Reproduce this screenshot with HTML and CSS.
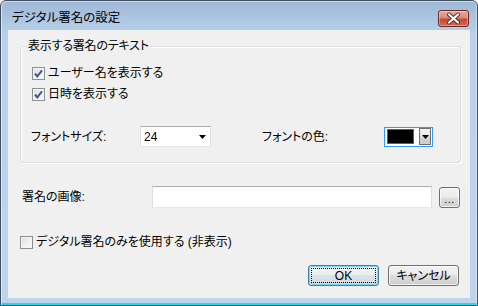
FILE: index.html
```html
<!DOCTYPE html>
<html lang="ja">
<head>
<meta charset="utf-8">
<title>デジタル署名の設定</title>
<link rel="stylesheet" href="styles.css">
</head>
<body>
<div class="window">
  <div class="titlebar">
    <span class="title">デジタル署名の設定</span>
    <span class="close">
      <svg width="29" height="15" viewBox="0 0 29 15">
        <path d="M10 3.5 L19 11.5 M19 3.5 L10 11.5" stroke="#5a2a24" stroke-width="4" stroke-linecap="round"/>
        <path d="M10 3.5 L19 11.5 M19 3.5 L10 11.5" stroke="#ffffff" stroke-width="2.2" stroke-linecap="round"/>
      </svg>
    </span>
  </div>
  <div class="client">
    <div class="group">
      <div class="legend">表示する署名のテキスト</div>
      <div class="check row1"><span class="box"><svg width="11" height="11" viewBox="0 0 11 11"><polyline points="2,5.5 4.3,8.3 9,2.3" fill="none" stroke="#3e5894" stroke-width="2"/></svg></span><span class="ctext">ユーザー名を表示する</span></div>
      <div class="check row2"><span class="box"><svg width="11" height="11" viewBox="0 0 11 11"><polyline points="2,5.5 4.3,8.3 9,2.3" fill="none" stroke="#3e5894" stroke-width="2"/></svg></span><span class="ctext">日時を表示する</span></div>
      <div class="font-row">
        <span class="lbl size-lbl">フォントサイズ:</span>
        <span class="combo"><span class="val">24</span><svg class="arrow" width="7" height="4" viewBox="0 0 7 4"><polygon points="0,0 7,0 3.5,4" fill="#000"/></svg></span>
        <span class="lbl color-lbl">フォントの色:</span>
        <span class="color-combo"><span class="swatch"></span><span class="drop"><svg width="7" height="4" viewBox="0 0 7 4"><polygon points="0,0 7,0 3.5,4" fill="#000"/></svg></span></span>
      </div>
    </div>
    <div class="image-row">
      <span class="lbl img-lbl">署名の画像:</span>
      <span class="textbox"></span>
      <span class="browse">...</span>
    </div>
    <div class="check row3"><span class="box empty"></span><span class="ctext">デジタル署名のみを使用する (非表示)</span></div>
    <div class="buttons">
      <span class="btn default"><span class="focus">OK</span></span>
      <span class="btn">キャンセル</span>
    </div>
  </div>
</div>
</body>
</html>
```

FILE: styles.css
```css
html, body {
  margin: 0;
  padding: 0;
  background: #ffffff;
}

body {
  font-family: "Liberation Sans", "Noto Sans CJK JP", sans-serif;
  font-size: 12px;
  font-feature-settings: "palt";
  color: #000;
}

.window {
  width: 478px;
  height: 306px;
  box-sizing: border-box;
  border: 1px solid #3f4e60;
  border-radius: 6px 6px 0 0;
  background: linear-gradient(180deg, #9db7d5 0px, #aec8e3 20px, #b9d1ea 34px, #bcd4ec 100%);
  box-shadow: inset 1px 1px 0 rgba(255,255,255,0.55), inset -1px 0 0 rgba(255,255,255,0.4), inset 0 -2px 0 #29d6f2;
  display: flex;
  flex-direction: column;
  overflow: hidden;
}

.titlebar {
  height: 29px;
  flex: none;
  display: flex;
  justify-content: space-between;
  align-items: flex-start;
  padding: 0 8px 0 11px;
}

.title {
  margin-top: 10px;
  line-height: 15px;
  font-size: 12.5px;
  color: #000;
}

.close {
  margin-top: 9px;
  width: 29px;
  height: 15px;
  border: 1px solid #6a2a22;
  border-radius: 3px;
  background: linear-gradient(180deg, #e9aa9c 0%, #d98a7a 45%, #c54a34 55%, #cf6a53 100%);
  box-shadow: inset 0 0 0 1px rgba(255,220,210,0.45);
  display: flex;
}

.client {
  margin: 0 7px;
  height: 268px;
  flex: none;
  background: #f0f0f0;
  display: flex;
  flex-direction: column;
}

.group {
  margin: 16px 9px 0 12px;
  height: 115px;
  border: 1px solid #d5dfe5;
  border-radius: 3px;
  box-shadow: inset 1px 1px 0 #ffffff, 1px 1px 0 #ffffff;
  display: flex;
  flex-direction: column;
}

.legend {
  margin: -8px 0 0 5px;
  padding: 0 2px;
  line-height: 14px;
  height: 14px;
  background: #f0f0f0;
  align-self: flex-start;
  letter-spacing: -0.2px;
}

.check {
  display: flex;
  align-items: center;
  height: 13px;
}

.box {
  width: 11px;
  height: 11px;
  border: 1px solid #8e8f8f;
  background: linear-gradient(135deg, #dcdcdc 0%, #f4f4f4 70%, #ffffff 100%);
  box-shadow: inset 0 0 0 1px #f4f4f4;
  flex: none;
  display: flex;
}

.ctext {
  margin-left: 3px;
  line-height: 13px;
}

.row1 {
  margin: 14px 0 0 11px;
}

.row2 {
  margin: 8px 0 0 11px;
}

.font-row {
  margin-top: 25px;
  display: flex;
  align-items: center;
  height: 21px;
  padding-left: 10px;
}

.lbl {
  line-height: 14px;
}

.size-lbl {
  width: 109px;
}

.combo {
  background: #ffffff;
  border: 1px solid #dbdfe6;
  border-top-color: #abadb3;
  border-bottom-color: #e3e9ef;
  display: flex;
  align-items: center;
  justify-content: space-between;
  padding: 0 4px 0 3px;
  box-sizing: border-box;
  width: 71px;
  height: 21px;
}

.val {
  line-height: 14px;
}

.color-lbl {
  margin-left: 51px;
  width: 122px;
}

.color-combo {
  width: 49px;
  height: 20px;
  box-sizing: border-box;
  border: 1px solid #3399ff;
  background: #ffffff;
  display: flex;
  align-items: center;
  padding: 0 1px 0 2px;
  gap: 5px;
}

.swatch {
  width: 28px;
  height: 15px;
  box-sizing: border-box;
  background: #000;
  border: 1px solid #606060;
}

.drop {
  width: 12px;
  height: 17px;
  box-sizing: border-box;
  border: 1px solid #707070;
  background: linear-gradient(180deg, #f2f2f2 0%, #e8e8e8 50%, #d6d6d6 50%, #cbcbcb 100%);
  display: flex;
  align-items: center;
  justify-content: center;
}

.image-row {
  margin-top: 23px;
  height: 22px;
  display: flex;
  align-items: center;
  padding-left: 14px;
}

.img-lbl {
  width: 130px;
}

.textbox {
  width: 280px;
  height: 22px;
  box-sizing: border-box;
  background: #ffffff;
  border: 1px solid #dbdfe6;
  border-top-color: #abadb3;
  border-bottom-color: #e3e9ef;
}

.browse {
  margin-left: 7px;
  width: 21px;
  height: 21px;
  box-sizing: border-box;
  border: 1px solid #707070;
  border-radius: 3px;
  background: linear-gradient(180deg, #f2f2f2 0%, #ebebeb 50%, #dddddd 50%, #cfcfcf 100%);
  box-shadow: inset 0 0 0 1px rgba(255,255,255,0.7);
  font-size: 11px;
  line-height: 23px;
  text-align: center;
  letter-spacing: 0.5px;
}

.row3 {
  margin: 28px 0 0 12px;
}

.buttons {
  margin-top: 16px;
  display: flex;
  justify-content: flex-end;
  gap: 9px;
  padding-right: 11px;
}

.btn {
  width: 71px;
  height: 21px;
  box-sizing: border-box;
  border: 1px solid #707070;
  border-radius: 3px;
  background: linear-gradient(180deg, #f2f2f2 0%, #ebebeb 50%, #dddddd 50%, #cfcfcf 100%);
  box-shadow: inset 0 0 0 1px rgba(255,255,255,0.75);
  display: flex;
  align-items: center;
  justify-content: center;
  line-height: 14px;
}

.btn.default {
  border-color: #3c7fb1;
  box-shadow: inset 0 0 0 1px #7fd3f5;
  background: linear-gradient(180deg, #f0f4f6 0%, #e9eef1 50%, #dde3e7 50%, #d3dade 100%);
  padding: 2px;
}

.focus {
  flex: 1;
  align-self: stretch;
  border: 1px dotted #000;
  display: flex;
  align-items: center;
  justify-content: center;
}
```
